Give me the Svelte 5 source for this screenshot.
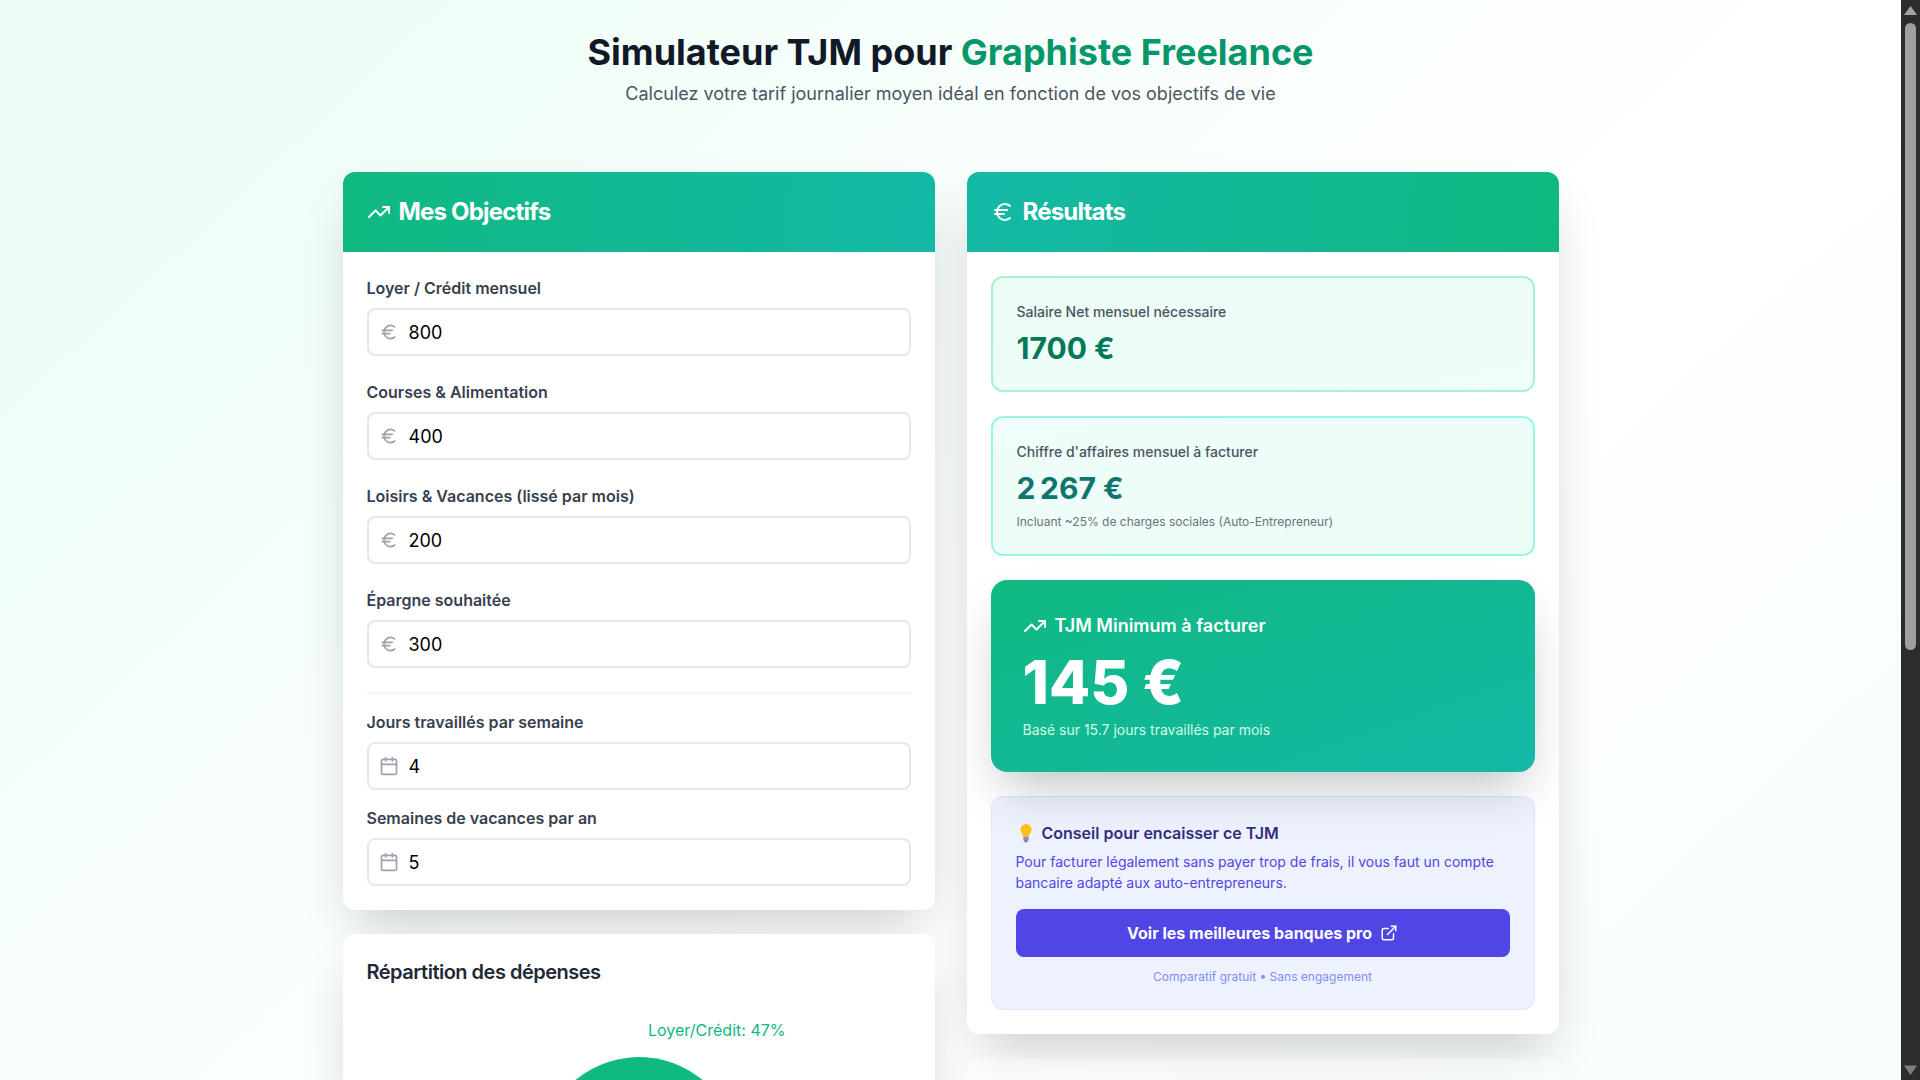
<script>
  const euroFields = [
    { label: 'Loyer / Crédit mensuel', value: 800 },
    { label: 'Courses & Alimentation', value: 400 },
    { label: 'Loisirs & Vacances (lissé par mois)', value: 200 },
    { label: 'Épargne souhaitée', value: 300 }
  ];
  const dayFields = [
    { label: 'Jours travaillés par semaine', value: 4 },
    { label: 'Semaines de vacances par an', value: 5 }
  ];
</script>

{#snippet trending(cls)}
  <svg class={cls} viewBox="0 0 24 24" fill="none" stroke="currentColor" stroke-width="2" stroke-linecap="round" stroke-linejoin="round"><polyline points="22 7 13.5 15.5 8.5 10.5 2 17"/><polyline points="16 7 22 7 22 13"/></svg>
{/snippet}
{#snippet euro(cls)}
  <svg class={cls} viewBox="0 0 24 24" fill="none" stroke="currentColor" stroke-width="2" stroke-linecap="round" stroke-linejoin="round"><path d="M4 10h12"/><path d="M4 14h9"/><path d="M19 6a7.7 7.7 0 0 0-5.2-2A7.9 7.9 0 0 0 6 12c0 4.4 3.500 8 7.800 8 2 0 3.800-.8 5.200-2"/></svg>
{/snippet}
{#snippet calendar(cls)}
  <svg class={cls} viewBox="0 0 24 24" fill="none" stroke="currentColor" stroke-width="2" stroke-linecap="round" stroke-linejoin="round"><path d="M8 2v4"/><path d="M16 2v4"/><rect x="3" y="4" width="18" height="18" rx="2"/><path d="M3 10h18"/></svg>
{/snippet}

<div class="shell">
  <div class="viewport">
    <div class="page">
      <header class="hero">
        <h1>Simulateur TJM pour <span>Graphiste Freelance</span></h1>
        <p>Calculez votre tarif journalier moyen idéal en fonction de vos objectifs de vie</p>
      </header>

      <main class="columns">
        <div class="col">
          <section class="card">
            <div class="card-head head-left">
              {@render trending('head-icon')}
              <h2>Mes Objectifs</h2>
            </div>
            <div class="card-body">
              {#each euroFields as f}
                <div class="field">
                  <span class="label">{f.label}</span>
                  <div class="input-wrap">
                    {@render euro('input-icon')}
                    <input type="text" value={f.value} />
                  </div>
                </div>
              {/each}
              <hr />
              <div class="days">
                {#each dayFields as f}
                  <div class="day-field">
                    <span class="label">{f.label}</span>
                    <div class="input-wrap">
                      {@render calendar('input-icon')}
                      <input type="text" value={f.value} />
                    </div>
                  </div>
                {/each}
              </div>
            </div>
          </section>

          <section class="card chart-card">
            <h3>Répartition des dépenses</h3>
            <svg class="pie" viewBox="0 0 544 320" width="544" height="320">
              <text x="281" y="34" class="slice-label" fill="#10b981">Loyer/Crédit: 47%</text>
              <path d="M272 155.500 L372 155.500 A100 100 0 0 0 172.800 142.500 Z" fill="#10b981"/>
              <path d="M272 155.500 L172.800 142.500 A100 100 0 0 0 210 234 Z" fill="#14b8a6"/>
              <path d="M272 155.500 L210 234 A100 100 0 0 0 281 255 Z" fill="#06b6d4"/>
              <path d="M272 155.500 L281 255 A100 100 0 0 0 372 155.500 Z" fill="#3b82f6"/>
            </svg>
          </section>
        </div>

        <div class="col">
          <section class="card">
            <div class="card-head head-right">
              {@render euro('head-icon')}
              <h2>Résultats</h2>
            </div>
            <div class="card-body results">
              <div class="stat stat-green">
                <p class="stat-label">Salaire Net mensuel nécessaire</p>
                <p class="stat-value green">1700 €</p>
              </div>
              <div class="stat stat-teal">
                <p class="stat-label">Chiffre d'affaires mensuel à facturer</p>
                <p class="stat-value teal">2&#8239;267 €</p>
                <p class="stat-note">Incluant ~25% de charges sociales (Auto-Entrepreneur)</p>
              </div>
              <div class="tjm">
                <div class="tjm-title">
                  {@render trending('tjm-icon')}
                  <span>TJM Minimum à facturer</span>
                </div>
                <p class="tjm-value">145 €</p>
                <p class="tjm-sub">Basé sur 15.7 jours travaillés par mois</p>
              </div>
              <div class="tip">
                <div class="tip-title">
                  <svg class="bulb" viewBox="0 0 16 20"><path d="M8 1a5.600 5.600 0 0 0-5.600 5.600c0 2.400 1.600 3.600 2.300 5.400.2.500.3 1 .3 1.500h6c0-.5.1-1 .3-1.500.7-1.800 2.300-3 2.300-5.400A5.600 5.600 0 0 0 8 1z" fill="#fcc21b"/><rect x="5.300" y="13.500" width="5.400" height="4.500" rx="1" fill="#9b8aa5"/><rect x="6.500" y="18" width="3" height="1.300" rx=".6" fill="#6f5f7d"/></svg>
                  <span>Conseil pour encaisser ce TJM</span>
                </div>
                <p class="tip-text">Pour facturer légalement sans payer trop de frais, il vous faut un compte bancaire adapté aux auto-entrepreneurs.</p>
                <button class="cta">
                  <span>Voir les meilleures banques pro</span>
                  <svg viewBox="0 0 24 24" fill="none" stroke="currentColor" stroke-width="2" stroke-linecap="round" stroke-linejoin="round"><path d="M15 3h6v6"/><path d="M10 14 21 3"/><path d="M18 13v6a2 2 0 0 1-2 2H5a2 2 0 0 1-2-2V8a2 2 0 0 1 2-2h6"/></svg>
                </button>
                <p class="tip-foot">Comparatif gratuit • Sans engagement</p>
              </div>
            </div>
          </section>
          <section class="card ghost-card"></section>
        </div>
      </main>
    </div>
  </div>

  <aside class="scrollbar" aria-hidden="true">
    <svg class="arrow" viewBox="0 0 19 23"><path d="M9.500 6 16 15H3z" fill="#a3a3a3"/></svg>
    <div class="thumb"></div>
    <svg class="arrow" viewBox="0 0 19 23"><path d="M9.500 18 16 8.500H3z" fill="#808080"/></svg>
  </aside>
</div>

<style>
  :global(body) {
    margin: 0;
    font-family: Inter, "Noto Sans", sans-serif;
    color: #111827;
  }
  * {
    box-sizing: border-box;
  }
  h1, h2, h3, p {
    margin: 0;
  }
  .shell {
    display: flex;
    height: 100vh;
    overflow: hidden;
  }
  .viewport {
    flex: 1;
    min-width: 0;
    overflow: hidden;
  }
  .scrollbar {
    flex: none;
    width: 19px;
    height: 100%;
    display: flex;
    flex-direction: column;
    align-items: center;
    background: #2c2c2c;
  }
  .arrow {
    display: block;
    width: 19px;
    height: 23px;
    flex: none;
  }
  .thumb {
    width: 11px;
    height: 627px;
    flex: none;
    margin-bottom: auto;
    background: #9f9f9f;
    border-radius: 6px;
  }
  .page {
    min-height: 1781px;
    padding: 32px 32px 48px;
    background: linear-gradient(to bottom right, #ecfdf5, #ffffff 50%, #f0fdfa);
  }
  .hero {
    text-align: center;
    margin-bottom: 64px;
  }
  h1 {
    font-size: 36px;
    line-height: 40px;
    font-weight: 700;
    color: #111827;
    margin-bottom: 8px;
  }
  h1 span {
    color: #059669;
  }
  .hero p {
    font-size: 18px;
    line-height: 28px;
    color: #4b5563;
  }
  .columns {
    max-width: 1216px;
    margin: 0 auto;
    display: grid;
    grid-template-columns: 1fr 1fr;
    gap: 32px;
    align-items: start;
  }
  .col {
    display: flex;
    flex-direction: column;
    gap: 24px;
  }
  .card {
    background: #fff;
    border-radius: 12px;
    overflow: hidden;
    box-shadow: 0 25px 50px -12px rgba(0,0,0,.2);
  }
  .card-head {
    height: 80px;
    display: flex;
    align-items: center;
    gap: 8px;
    padding: 0 24px;
    color: #fff;
  }
  .head-left {
    background: linear-gradient(97deg, #10b981, #14b8a6);
  }
  .head-right {
    background: linear-gradient(97deg, #14b8a6, #10b981);
  }
  .head-icon {
    width: 24px;
    height: 24px;
    flex: none;
  }
  h2 {
    font-size: 24px;
    line-height: 32px;
    font-weight: 700;
    letter-spacing: -0.8px;
  }
  .card-body {
    padding: 24px;
  }
  .field {
    margin-bottom: 24px;
  }
  .label {
    display: block;
    font-size: 16px;
    line-height: 24px;
    font-weight: 600;
    color: #374151;
    margin-bottom: 8px;
  }
  .input-wrap {
    position: relative;
  }
  .input-icon {
    position: absolute;
    left: 12px;
    top: 14px;
    width: 20px;
    height: 20px;
    color: #9ca3af;
  }
  input {
    display: block;
    width: 100%;
    height: 48px;
    padding: 0 16px 0 40px;
    border: 2px solid #e5e7eb;
    border-radius: 8px;
    background: #fff;
    font: 400 18px/28px Inter, sans-serif;
    color: #000;
    outline: none;
  }
  hr {
    border: 0;
    height: 2px;
    background: #f3f4f6;
    margin: 0 0 16px;
  }
  .days {
    display: flex;
    flex-direction: column;
    gap: 16px;
  }
  .chart-card {
    padding: 24px;
    height: 520px;
  }
  h3 {
    font-size: 20px;
    line-height: 28px;
    font-weight: 600;
    letter-spacing: -0.5px;
    color: #1f2937;
    margin-bottom: 16px;
  }
  .pie {
    display: block;
  }
  .slice-label {
    font-size: 16px;
    font-family: Inter, sans-serif;
  }
  .ghost-card {
    height: 500px;
    opacity: .25;
  }
  .results {
    display: flex;
    flex-direction: column;
    gap: 24px;
  }
  .stat {
    padding: 24px;
    border-width: 2px;
    border-style: solid;
    border-radius: 12px;
  }
  .stat-green {
    border-color: #a7f3d0;
    background: linear-gradient(to bottom right, #ecfdf5, #f0fdfa);
  }
  .stat-teal {
    border-color: #99f6e4;
    background: linear-gradient(to bottom right, #f0fdfa, #ecfdf5);
  }
  .stat-label {
    font-size: 14px;
    line-height: 20px;
    font-weight: 500;
    color: #4b5563;
    margin-bottom: 8px;
  }
  .stat-value {
    font-size: 30px;
    line-height: 36px;
    font-weight: 700;
    font-variation-settings: "opsz" 32;
  }
  .green {
    color: #047857;
  }
  .teal {
    color: #0f766e;
  }
  .stat-note {
    font-size: 12px;
    line-height: 16px;
    color: #6b7280;
    margin-top: 8px;
  }
  .tjm {
    position: relative;
    z-index: 1;
    padding: 32px;
    border-radius: 16px;
    background: linear-gradient(to bottom right, #10b981, #14b8a6);
    color: #fff;
    box-shadow: 0 25px 50px -12px rgba(0,0,0,.25);
  }
  .tjm-title {
    display: flex;
    align-items: center;
    gap: 8px;
    font-size: 18px;
    line-height: 28px;
    font-weight: 600;
    margin-bottom: 12px;
  }
  .tjm-icon {
    width: 24px;
    height: 24px;
  }
  .tjm-value {
    font-size: 60px;
    line-height: 60px;
    font-weight: 800;
    margin-bottom: 8px;
    font-variation-settings: "opsz" 32;
  }
  .tjm-sub {
    font-size: 14px;
    line-height: 20px;
    color: #d1fae5;
  }
  .tip {
    padding: 24px;
    border: 1px solid #e0e7ff;
    border-radius: 12px;
    background: #eef2ff;
  }
  .tip-title {
    display: flex;
    align-items: center;
    gap: 8px;
    font-size: 16px;
    line-height: 24px;
    font-weight: 600;
    color: #312e81;
    margin-bottom: 7px;
  }
  .bulb {
    width: 16px;
    height: 20px;
    margin-left: 2px;
  }
  .tip-text {
    font-size: 14px;
    line-height: 20.5px;
    color: #4f46e5;
    margin-bottom: 16px;
  }
  .cta {
    width: 100%;
    height: 48px;
    display: flex;
    align-items: center;
    justify-content: center;
    gap: 8px;
    border: 0;
    border-radius: 8px;
    background: #4f46e5;
    color: #fff;
    font: 700 16px/24px Inter, sans-serif;
  }
  .cta svg {
    width: 18px;
    height: 18px;
  }
  .tip-foot {
    margin-top: 12px;
    text-align: center;
    font-size: 12px;
    line-height: 16px;
    color: #818cf8;
  }
</style>
